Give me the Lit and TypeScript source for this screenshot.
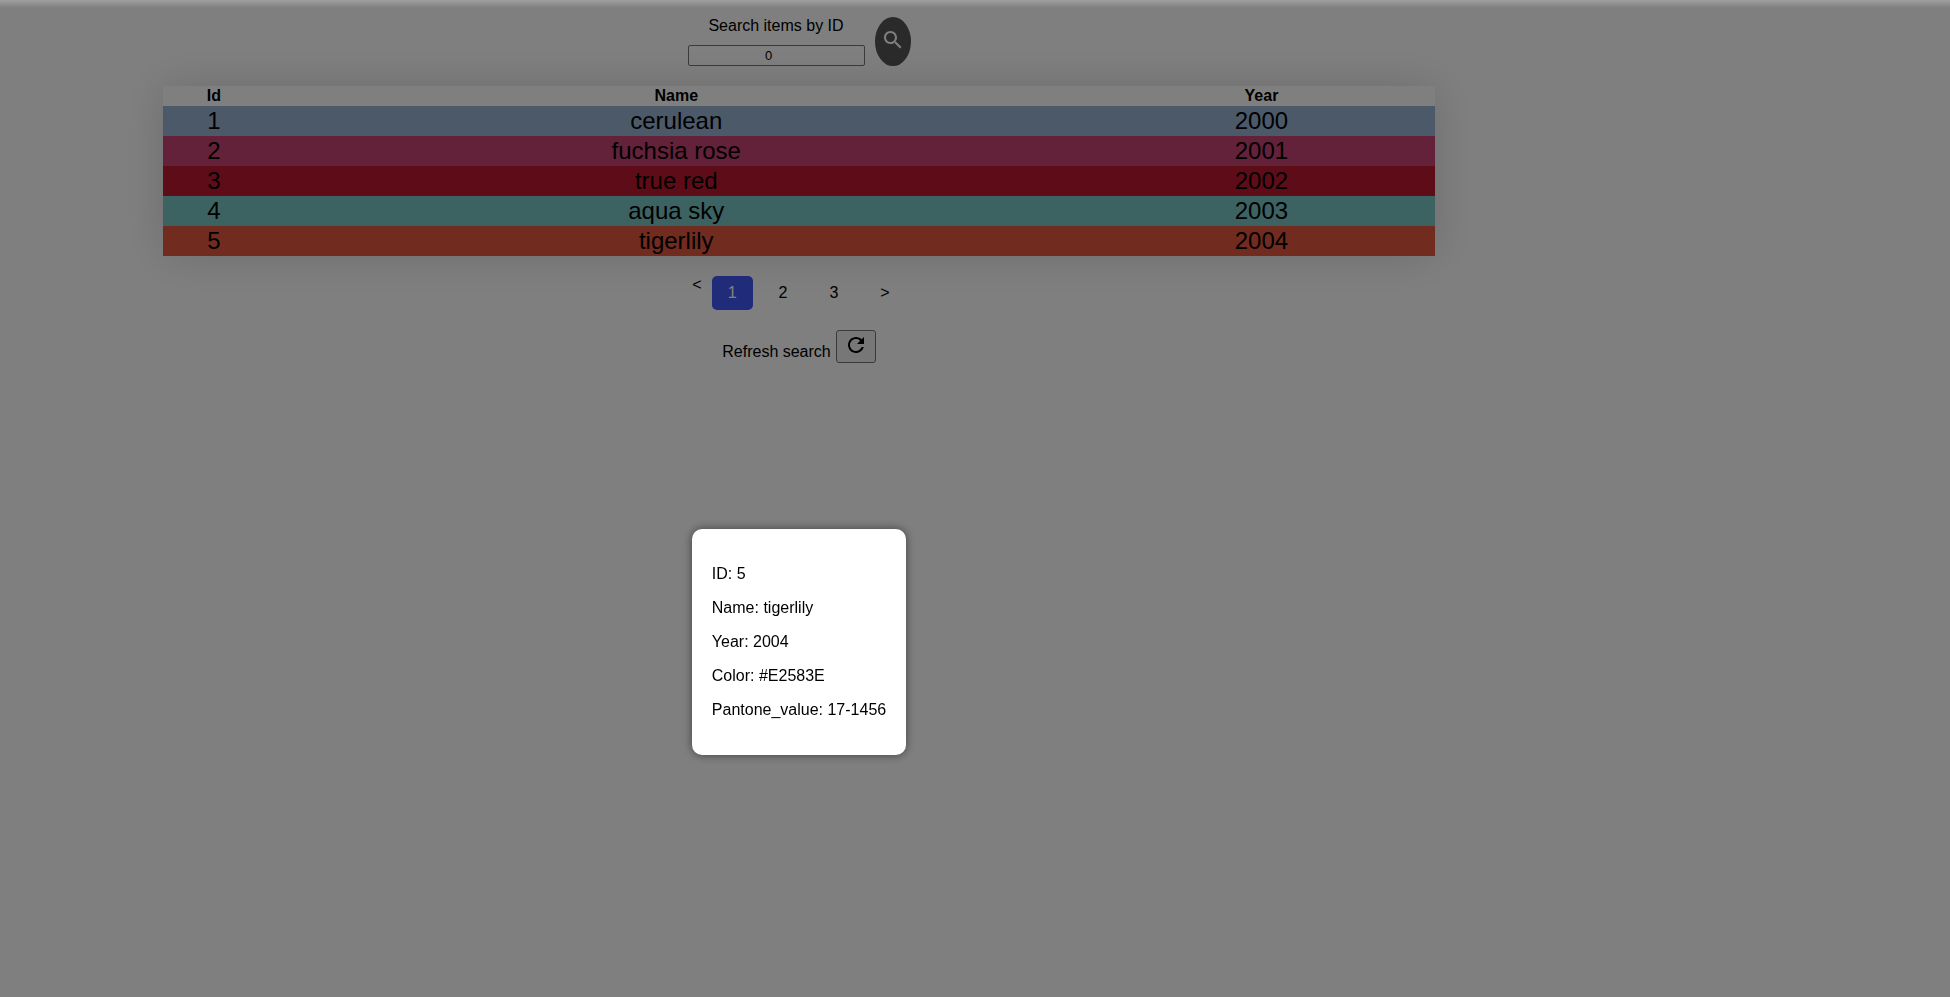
import { LitElement, html, css } from "lit";
import { customElement, state } from "lit/decorators.js";

interface Item {
  id: number;
  name: string;
  year: number;
  color: string;
  pantone: string;
}

const ITEMS: Item[] = [
  { id: 1, name: "cerulean", year: 2000, color: "#98B2D1", pantone: "15-4020" },
  { id: 2, name: "fuchsia rose", year: 2001, color: "#C74375", pantone: "17-2031" },
  { id: 3, name: "true red", year: 2002, color: "#BF1932", pantone: "19-1664" },
  { id: 4, name: "aqua sky", year: 2003, color: "#7BC4C4", pantone: "14-4811" },
  { id: 5, name: "tigerlily", year: 2004, color: "#E2583E", pantone: "17-1456" },
];

@customElement("app-root")
export class AppRoot extends LitElement {
  @state() private selected: Item | null = ITEMS[4];

  static styles = css`
    :host {
      display: block;
      min-height: 100vh;
      background: #fff;
      color: #000;
      font: 16px/18px "Liberation Sans", Arial, sans-serif;
    }
    main {
      box-sizing: border-box;
      width: 82%;
      padding: 17px 5px 16px 4px;
      display: flex;
      flex-direction: column;
      align-items: center;
    }
    .search {
      display: flex;
      gap: 10px;
      margin-bottom: 20px;
    }
    .field {
      display: flex;
      flex-direction: column;
      align-items: center;
      gap: 10px;
    }
    .field input {
      box-sizing: border-box;
      width: 177px;
      height: 21px;
      padding: 1px 17px 1px 2px;
      border: 1px solid #767676;
      border-radius: 2px;
      background: #fff;
      font: 13px/16px "Liberation Sans", Arial, sans-serif;
      text-align: center;
    }
    .round {
      width: 36px;
      height: 49px;
      padding: 0 0 4px;
      border: 0;
      border-radius: 50%;
      background: #555;
      color: #fff;
    }
    svg {
      display: block;
      margin: 0 auto;
      fill: currentColor;
    }
    table {
      width: 80%;
      border-collapse: collapse;
      text-align: center;
      box-shadow: 0 0 40px rgba(0, 0, 0, 0.15);
    }
    th,
    td {
      padding: 1px;
    }
    thead {
      background: #fff;
    }
    tbody {
      font-size: 24px;
      line-height: 28px;
    }
    tbody tr {
      cursor: pointer;
    }
    .pages {
      display: flex;
      margin: 20px 0;
    }
    .pages a {
      padding: 8px 16px;
      border-radius: 5px;
      color: #000;
      text-decoration: none;
    }
    .pages a.prev {
      padding: 0 10px 0 0;
    }
    .pages a.active {
      background: #4158f5;
      color: #fff;
    }
    .pages a + a + a {
      margin-left: 10px;
    }
    .refresh {
      display: flex;
      align-items: flex-start;
      gap: 5px;
    }
    .refresh label {
      padding-top: 13px;
    }
    .refresh button {
      width: 40px;
      height: 33px;
      padding: 0 0 3px;
      border: 1px solid #767676;
      border-radius: 3px;
      background: #efefef;
      color: #000;
    }
    .overlay {
      position: fixed;
      inset: 0;
      display: flex;
      align-items: center;
      background:
        linear-gradient(rgba(255, 255, 255, 0.25), rgba(255, 255, 255, 0) 8px),
        rgba(0, 0, 0, 0.5);
    }
    .stage {
      box-sizing: border-box;
      width: 82%;
      display: flex;
      justify-content: center;
      padding: 287px 1px 0 0;
    }
    .card {
      padding: 36px 20px;
      border-radius: 10px;
      background: #fff;
      box-shadow: 0 0 10px rgba(0, 0, 0, 0.5);
      display: flex;
      flex-direction: column;
      gap: 16px;
    }
    .card p {
      margin: 0;
    }
  `;

  render() {
    return html`
      <main>
        <form class="search" @submit=${(e: Event) => e.preventDefault()}>
          <div class="field">
            <label for="item-id">Search items by ID</label>
            <input id="item-id" type="text" inputmode="numeric" value="0" />
          </div>
          <button class="round" aria-label="Search">
            <svg width="24" height="24" viewBox="0 0 24 24">
              <path
                d="M15.5 14h-.79l-.28-.27C15.41 12.59 16 11.11 16 9.5 16 5.91 13.09 3 9.5 3S3 5.91 3 9.5 5.91 16 9.5 16c1.61 0 3.09-.59 4.23-1.57l.27.28v.79l5 4.99L20.49 19l-4.99-5zm-6 0C7.01 14 5 11.99 5 9.5S7.01 5 9.5 5 14 7.01 14 9.5 11.99 14 9.5 14z"
              />
            </svg>
          </button>
        </form>
        <table>
          <thead>
            <tr>
              <th>Id</th>
              <th>Name</th>
              <th>Year</th>
            </tr>
          </thead>
          <tbody>
            ${ITEMS.map(
              (item) => html`
                <tr style="background:${item.color}" @click=${() => (this.selected = item)}>
                  <td>${item.id}</td>
                  <td>${item.name}</td>
                  <td>${item.year}</td>
                </tr>
              `
            )}
          </tbody>
        </table>
        <nav class="pages" aria-label="Pages">
          <a class="prev" href="#">&lt;</a>
          <a class="active" href="#1">1</a>
          <a href="#2">2</a>
          <a href="#3">3</a>
          <a href="#next">&gt;</a>
        </nav>
        <div class="refresh">
          <label for="refresh">Refresh search</label>
          <button id="refresh">
            <svg width="24" height="24" viewBox="0 0 24 24">
              <path
                d="M17.65 6.35C16.2 4.9 14.21 4 12 4c-4.42 0-7.99 3.58-7.99 8s3.57 8 7.99 8c3.73 0 6.84-2.55 7.73-6h-2.08c-.82 2.33-3.04 4-5.65 4-3.31 0-6-2.69-6-6s2.69-6 6-6c1.66 0 3.14.69 4.22 1.78L13 11h7V4l-2.35 2.35z"
              />
            </svg>
          </button>
        </div>
      </main>
      ${this.selected
        ? html`
            <div class="overlay" @click=${() => (this.selected = null)}>
              <div class="stage">
                <div class="card" role="dialog" aria-label="Item details">
                  <p>ID: ${this.selected.id}</p>
                  <p>Name: ${this.selected.name}</p>
                  <p>Year: ${this.selected.year}</p>
                  <p>Color: ${this.selected.color}</p>
                  <p>Pantone_value: ${this.selected.pantone}</p>
                </div>
              </div>
            </div>
          `
        : null}
    `;
  }
}
